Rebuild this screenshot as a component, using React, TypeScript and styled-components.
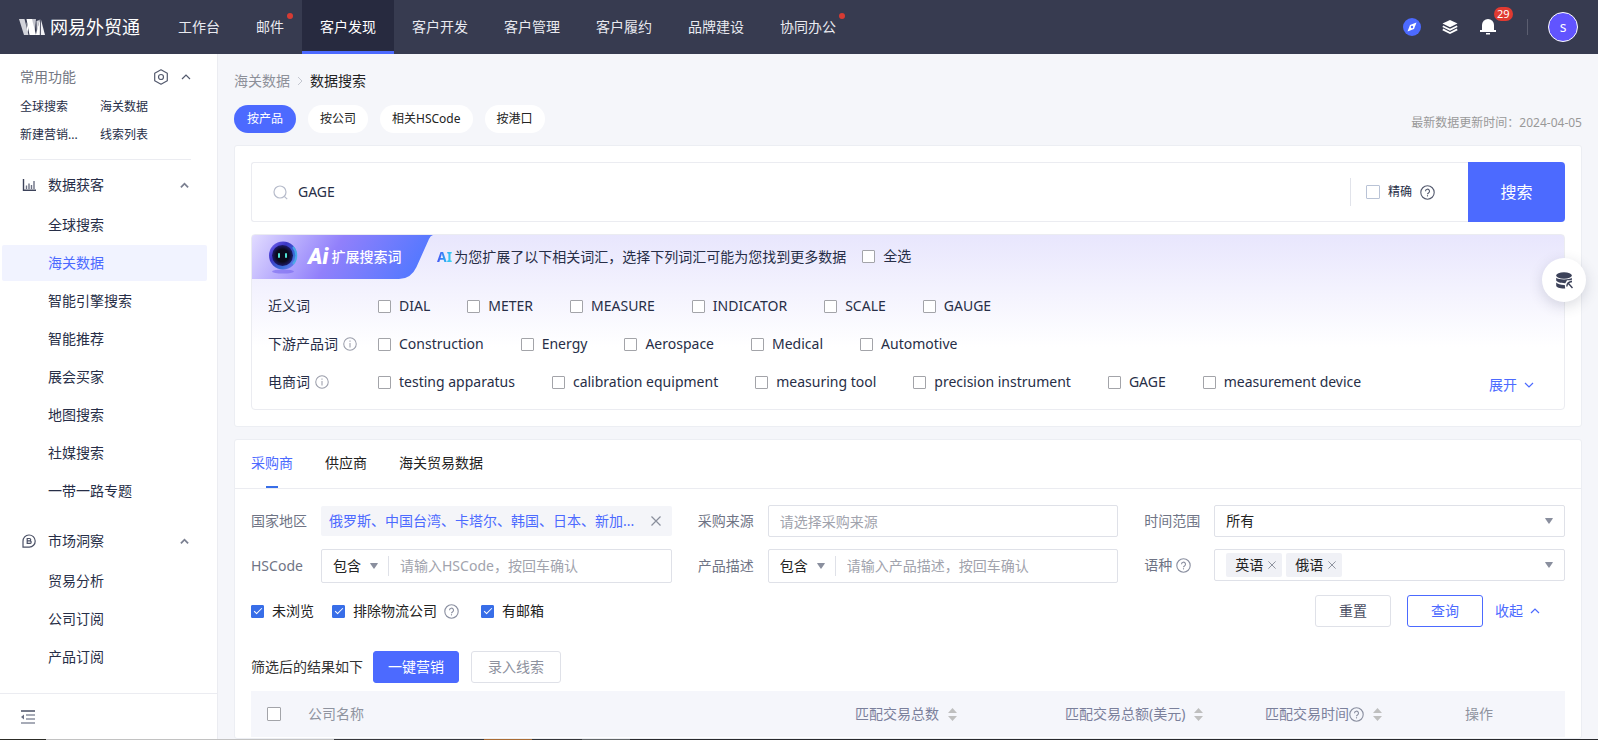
import React from "react";
import styled, { createGlobalStyle, css } from "styled-components";

const BLUE = "#4c6aff";
const INK = "#272e47";

const Global = createGlobalStyle`
  *, *::before, *::after { box-sizing: border-box; }
  body {
    margin: 0;
    background: #f5f6fa;
    color: ${INK};
    font: 14px/20px "Noto Sans", "Noto Sans CJK SC", sans-serif;
  }
  button, input, select { font: inherit; color: inherit; margin: 0; padding: 0; }
  button { background: none; border: 0; cursor: pointer; white-space: nowrap; }
  a { color: inherit; text-decoration: none; }
  svg { display: block; flex: none; }
  h2 { margin: 0; font: inherit; }
`;

/* ---------- page frame ---------- */

const Shell = styled.div`
  display: flex;
  flex-direction: column;
  height: 100vh;
  overflow: hidden;
`;

const TopBar = styled.header`
  display: flex;
  align-items: center;
  flex: none;
  height: 54px;
  padding: 0 20px 0 19px;
  background: #373b50;
  color: #fff;
`;

const Body = styled.div`
  display: flex;
  flex: 1;
  min-height: 0;
`;

const Strip = styled.div`
  flex: none;
  height: 1px;
  background: linear-gradient(
    90deg,
    #2c2c26 46px,
    #c2c2c2 46px 334px,
    #37383c 334px 484px,
    #a96c35 484px 532px,
    #333438 532px 582px,
    #626668 582px 630px,
    #28292d 630px
  );
`;

/* ---------- top bar ---------- */

const Brand = styled.a`
  display: flex;
  align-items: center;
  gap: 5px;
  width: 141px;
  font-size: 18px;
  white-space: nowrap;
`;

const Nav = styled.nav`
  display: flex;
  flex: 1;
  align-self: stretch;
`;

const NavLink = styled.a<{ $active?: boolean }>`
  display: flex;
  align-items: center;
  padding: 0 18px;
  color: #e9eaf0;
  white-space: nowrap;
  border-top: 3px solid transparent;
  border-bottom: 3px solid transparent;
  ${(p) =>
    p.$active &&
    css`
      color: #fff;
      background: #272a3f;
      border-top-color: #272a3f;
      border-bottom-color: ${BLUE};
    `}
`;

const Dotted = styled.span`
  position: relative;
  &::after {
    content: "";
    position: absolute;
    top: -4px;
    right: -9px;
    width: 6px;
    height: 6px;
    border-radius: 50%;
    background: #d63b33;
  }
`;

const Tools = styled.div`
  display: flex;
  align-items: center;
  gap: 20px;
`;

const ToolButton = styled.button`
  position: relative;
  display: grid;
  place-items: center;
  width: 18px;
  height: 18px;
`;

const Count = styled.span`
  position: absolute;
  top: -11px;
  left: 15px;
  padding: 0 3px;
  border-radius: 7px;
  background: #e03a31;
  color: #fff;
  font-size: 11px;
  line-height: 14px;
`;

const ToolDivider = styled.span`
  width: 1px;
  height: 16px;
  margin-left: 10px;
  background: #5b5e70;
`;

const Avatar = styled.button`
  width: 30px;
  height: 30px;
  border: 1px solid #fff;
  border-radius: 50%;
  background: #6154ff;
  color: #fff;
`;

/* ---------- side bar ---------- */

const Side = styled.aside`
  display: flex;
  flex-direction: column;
  flex: none;
  width: 218px;
  background: #fff;
  border-right: 1px solid #ebecf1;
`;

const SideScroll = styled.div`
  flex: 1;
  min-height: 0;
  overflow: hidden;
  padding-top: 12px;
`;

const QuickHead = styled.div`
  display: flex;
  align-items: center;
  gap: 12px;
  height: 22px;
  padding: 0 26px 0 20px;
  color: #747883;
  h2 { flex: 1; }
  button { color: #545a6e; }
`;

const QuickLinks = styled.div`
  display: grid;
  grid-template-columns: 80px auto;
  grid-auto-rows: 28px;
  align-items: center;
  margin: 5px 26px 3px 20px;
  padding-bottom: 10px;
  border-bottom: 1px solid #ebecf1;
  font-size: 12px;
`;

const Group = styled.section`
  margin-bottom: 10px;
`;

const GroupHead = styled.button`
  display: flex;
  align-items: center;
  gap: 12px;
  width: 100%;
  height: 44px;
  padding: 0 28px 0 22px;
  text-align: left;
  span { flex: 1; }
`;

const SideLink = styled.a<{ $active?: boolean }>`
  display: flex;
  align-items: center;
  height: 36px;
  margin: 0 10px 2px 2px;
  padding-left: 46px;
  border-radius: 2px;
  color: ${(p) => (p.$active ? BLUE : INK)};
  background: ${(p) => (p.$active ? "#f1f3ff" : "none")};
`;

const SideFoot = styled.div`
  display: flex;
  align-items: center;
  flex: none;
  height: 46px;
  padding-left: 21px;
  border-top: 1px solid #ebecf1;
`;

/* ---------- main column ---------- */

const Main = styled.main`
  display: flex;
  flex-direction: column;
  flex: 1;
  min-width: 0;
  padding: 17px 16px 0;
`;

const Crumbs = styled.nav`
  display: flex;
  align-items: center;
  gap: 7px;
  color: #8d9099;
  b { font-weight: 400; color: #232323; }
`;

const PillRow = styled.div`
  display: flex;
  align-items: center;
  gap: 12px;
  margin: 14px 0 12px;
`;

const Pill = styled.button<{ $active?: boolean }>`
  height: 28px;
  padding: 0 ${(p) => (p.$active ? 13 : 12)}px;
  border-radius: 14px;
  font-size: 12px;
  background: ${(p) => (p.$active ? BLUE : "#fff")};
  color: ${(p) => (p.$active ? "#fff" : "#232323")};
`;

const Updated = styled.span`
  align-self: flex-end;
  margin-left: auto;
  color: #999;
  font-size: 12px;
`;

const Card = styled.section<{ $fill?: boolean }>`
  flex: ${(p) => (p.$fill ? "1" : "none")};
  min-height: 0;
  border: 1px solid #eceef3;
  border-radius: 3px;
  background: #fff;
`;

const SearchCard = styled(Card)`
  padding: 16px;
  margin-bottom: 12px;
`;

const SearchBox = styled.form`
  display: flex;
  align-items: center;
  height: 60px;
  padding-left: 21px;
  border: 1px solid #ebecf1;
  border-right: 0;
  border-radius: 3px;
  font-size: 14px;
`;

const SearchInput = styled.input`
  flex: 1;
  min-width: 0;
  margin-left: 10px;
  border: 0;
  outline: 0;
  background: none;
`;

const Exact = styled.div`
  display: flex;
  align-items: center;
  gap: 8px;
  height: 28px;
  padding: 0 33px 0 15px;
  border-left: 1px solid #e1e3ea;
  font-size: 12px;
`;

const SearchButton = styled.button`
  width: 97px;
  height: 60px;
  border-radius: 0 4px 4px 0;
  background: ${BLUE};
  color: #fff;
  font-size: 16px;
`;

const AiPanel = styled.div`
  margin-top: 12px;
  border: 1px solid #ebecf1;
  border-radius: 4px;
  overflow: hidden;
  background: linear-gradient(180deg, #e8e6fd 0, #fff 112px);
  padding-bottom: 8px;
`;

const AiHead = styled.div`
  display: flex;
  align-items: center;
  height: 44px;
  margin-bottom: 8px;
`;

const AiBadge = styled.div`
  position: relative;
  display: flex;
  align-items: center;
  width: 185px;
  height: 44px;
  padding-left: 16px;
  color: #fff;
  font-weight: 500;
`;

const BadgeShape = styled.svg`
  position: absolute;
  top: 0;
  left: 0;
`;

const BadgeText = styled.span`
  position: relative;
  display: flex;
  align-items: center;
  gap: 3px;
  margin-left: 10px;
  i { font: italic 900 22px/24px Roboto, sans-serif; }
`;

const Robot = styled.svg`
  position: relative;
`;

const AiWord = styled.b`
  margin-right: 2px;
  background: linear-gradient(100deg, #4c4cf5 10%, #2d9cf5 50%, #35d6ee 90%);
  background-clip: text;
  color: transparent;
`;

const AiSelectAll = styled.div`
  margin-left: 16px;
`;

const WordRow = styled.div`
  display: flex;
  align-items: center;
  height: 38px;
  padding: 0 30px 0 16px;
`;

const WordLabel = styled.div`
  display: flex;
  align-items: center;
  gap: 5px;
  width: 110px;
  color: ${INK};
`;

const WordList = styled.div`
  display: flex;
  flex: 1;
  gap: 37px;
`;

const TextButton = styled.button`
  display: flex;
  align-items: center;
  gap: 7px;
  color: ${BLUE};
`;

const MoreButton = styled(TextButton)`
  padding-top: 6px;
`;

/* ---------- form pieces ---------- */

const CheckLabel = styled.label`
  display: inline-flex;
  align-items: center;
  gap: 8px;
  white-space: nowrap;
`;

const Check = styled.input.attrs({ type: "checkbox" })<{ $size?: number; $tone?: string }>`
  appearance: none;
  display: grid;
  place-items: center;
  flex: none;
  width: ${(p) => p.$size ?? 13}px;
  height: ${(p) => p.$size ?? 13}px;
  border: 1px solid ${(p) => p.$tone ?? "#a3a4a9"};
  border-radius: 1px;
  background: #fff;
  &:checked {
    border-color: #386ee8;
    background: #386ee8;
  }
  &:checked::after {
    content: "";
    width: 4px;
    height: 8px;
    margin-bottom: 2px;
    border: solid #fff;
    border-width: 0 1px 1px 0;
    transform: rotate(45deg);
  }
`;

const Tabs = styled.div`
  display: flex;
  gap: 32px;
  height: 49px;
  padding: 0 16px;
  border-bottom: 1px solid #ebecf1;
`;

const Tab = styled.button<{ $active?: boolean }>`
  display: grid;
  grid-template-rows: 1fr 2px;
  justify-items: center;
  align-items: center;
  color: ${(p) => (p.$active ? BLUE : "#232323")};
  &::after {
    content: "";
    width: 12px;
    height: 2px;
    background: ${(p) => (p.$active ? "#386ee8" : "none")};
  }
`;

const Filters = styled.div`
  display: grid;
  grid-template-columns: repeat(3, 1fr);
  align-items: start;
  gap: 12px 26px;
  padding: 16px 16px 0;
`;

const Field = styled.div`
  display: flex;
  align-items: center;
  min-height: 32px;
`;

const FieldLabel = styled.label`
  display: flex;
  align-items: center;
  gap: 4px;
  flex: none;
  width: 70px;
  color: #6f7485;
`;

const frame = css`
  flex: 1;
  min-width: 0;
  border: 1px solid #dfe1e8;
  border-radius: 2px;
  background: #fff;
  color: #232323;
`;

const TextInput = styled.input`
  ${frame}
  height: 32px;
  padding: 0 11px;
  &::placeholder { color: #a1a3ad; opacity: 1; }
`;

const Combo = styled.div<{ $tall?: boolean }>`
  ${frame}
  display: flex;
  align-items: center;
  gap: 4px;
  height: ${(p) => (p.$tall ? 34 : 32)}px;
  padding: 0 11px;
`;

const PlainSelect = styled.select<{ $width?: number }>`
  appearance: none;
  border: 0;
  outline: 0;
  background: none;
  ${(p) => (p.$width ? `width: ${p.$width}px;` : "flex: 1;")}
`;

const BareInput = styled.input`
  flex: 1;
  min-width: 0;
  height: 20px;
  margin-left: 6px;
  padding-left: 11px;
  border: 0;
  border-left: 1px solid #dfe1e8;
  outline: 0;
  background: none;
  &::placeholder { color: #a1a3ad; opacity: 1; }
`;

const Picked = styled.div`
  display: flex;
  align-items: center;
  flex: 1;
  min-width: 0;
  height: 30px;
  padding: 0 11px 0 8px;
  border-radius: 2px;
  background: #f4f5f9;
  color: ${BLUE};
  white-space: nowrap;
  > span { flex: 1; }
`;

const Tag = styled.span`
  display: flex;
  align-items: center;
  gap: 5px;
  height: 24px;
  padding: 0 6px 0 9px;
  border-radius: 2px;
  background: #f0f1f6;
  & + & { margin-right: auto; }
`;

const Options = styled.div`
  display: flex;
  align-items: center;
  height: 32px;
  margin: 12px 16px 0;
  padding-right: 25px;
  color: #232323;
`;

const OptionGroup = styled.div<{ $after: number }>`
  display: flex;
  align-items: center;
  gap: 7px;
  margin-right: ${(p) => p.$after}px;
`;

const Actions = styled.div`
  display: flex;
  gap: 16px;
  margin: 0 12px 0 auto;
`;

const Button = styled.button<{ $kind: "plain" | "outline" | "solid" | "muted"; $width: number }>`
  width: ${(p) => p.$width}px;
  height: 32px;
  border: 1px solid ${(p) => (p.$kind === "plain" || p.$kind === "muted" ? "#dfe1e8" : BLUE)};
  border-radius: 3px;
  background: ${(p) => (p.$kind === "solid" ? BLUE : "#fff")};
  color: ${(p) => ({ plain: "#4b5064", outline: BLUE, solid: "#fff", muted: "#8d919e" })[p.$kind]};
`;

const ResultBar = styled.div`
  display: flex;
  align-items: center;
  gap: 12px;
  margin: 24px 16px 8px;
  color: #333;
  > span { margin-right: -2px; }
`;

const TableWrap = styled.div`
  padding: 0 16px;
`;

const Table = styled.table`
  width: 100%;
  table-layout: fixed;
  border-collapse: collapse;
  background: #f5f6fb;
  th {
    height: 46px;
    padding: 0;
    font-weight: 400;
    text-align: left;
    white-space: nowrap;
    color: #7b809b;
  }
  th:nth-child(1) { padding-left: 16px; }
  th:nth-child(2), th:last-child { color: #8f939f; }
`;

const HeadCell = styled.span`
  display: flex;
  align-items: center;
  svg:last-child { margin-left: 9px; }
`;

const FloatButton = styled.button`
  position: fixed;
  top: 258px;
  right: 12px;
  display: grid;
  place-items: center;
  width: 44px;
  height: 44px;
  border-radius: 50%;
  background: #fff;
  box-shadow: 0 4px 14px rgba(50, 56, 85, 0.18);
`;

/* ---------- drawings ---------- */

const LogoMark = () => (
  <svg width="26" height="16" viewBox="0 0 26 16">
    <path d="M0 0h5.500l4 16H5Z" fill="#d2d3da" />
    <path d="M12.500 0h4.500l-1.500 15Z" fill="#c4c5ce" />
    <path d="M7.500 0h5.500l4 16h-6.500Z" fill="#fff" />
    <path d="M7.600 3 9.300 9.500 8.200 14Z" fill="#fff" />
    <path d="M17.500 2 20.500 1 17.800 14Z" fill="#d2d3da" />
    <path d="M21 0 16.800 16h4Z" fill="#fff" />
    <path d="M21.800 0 26 16h-4.200Z" fill="#f1f1f5" />
  </svg>
);

const Compass = () => (
  <svg width="18" height="18" viewBox="0 0 18 18">
    <circle cx="9" cy="9" r="9" fill={BLUE} />
    <path d="M13.500 4.500 11 11 4.500 13.500 7 7Z" fill="#fff" />
    <circle cx="9" cy="9" r="1.200" fill={BLUE} />
  </svg>
);

const Layers = () => (
  <svg width="16" height="16" viewBox="0 0 16 16">
    <path d="M8 1 15.500 4.500 8 8.200.500 4.500Z" fill="#fff" />
    <path d="M.800 7.200 8 10.800l7.200-3.600M.800 10.400 8 14l7.200-3.600" fill="none" stroke="#fff" strokeWidth="1.800" />
  </svg>
);

const Bell = () => (
  <svg width="16" height="18" viewBox="0 0 16 18">
    <path d="M8 1a6 6 0 0 1 6 6v5H2V7a6 6 0 0 1 6-6Z" fill="#fff" />
    <path d="M0 12h16v2H0ZM6 15h4v1.500H6Z" fill="#fff" />
  </svg>
);

const HexGear = () => (
  <svg width="16" height="16" viewBox="0 0 16 16" fill="none" stroke="currentColor" strokeWidth="1.200">
    <path d="M8 .800 14.300 4.300v7.400L8 15.200 1.700 11.700V4.300Z" strokeLinejoin="round" />
    <circle cx="8" cy="8" r="2.500" />
  </svg>
);

const Chevron = ({ up, bold, size = 10 }: { up?: boolean; bold?: boolean; size?: number }) => (
  <svg width={size} height={size} viewBox="0 0 10 10" fill="none" stroke={bold ? "#7a7f90" : "currentColor"} strokeWidth={bold ? 2 : 1.200}>
    <path d={up ? "M1 7l4-4 4 4" : "M1 3l4 4 4-4"} />
  </svg>
);

const ChartIcon = () => (
  <svg width="14" height="14" viewBox="0 0 14 14" fill="none" stroke="#6d7285" strokeWidth="1.400">
    <path d="M1.500 1v11.300H14" stroke="#3c4259" />
    <path d="M4.500 7.500V11M7 5.500V11M9.500 7V11M12 3V11" />
  </svg>
);

const BubbleIcon = () => (
  <svg width="14" height="14" viewBox="0 0 14 14" fill="none" stroke="#4b5166" strokeWidth="1.200">
    <path d="M1 13.200V7.300A6.100 6.100 0 1 1 7.300 13.200Z" />
    <path d="M5.200 4.500h2.300a1.200 1.200 0 0 1 0 2.400H5.200Zm0 2.400h2.700a1.200 1.200 0 0 1 0 2.500H5.200Z" />
  </svg>
);

const CollapseIcon = () => (
  <svg width="14" height="14" viewBox="0 0 14 14" fill="none" stroke="#8b90a0" strokeWidth="1.600">
    <path d="M0 1h14" stroke="#545a6e" />
    <path d="M5 5h9M5 9h9M0 13h14" />
    <path d="M3 4.500v5L0 7Z" fill="#6a7084" stroke="none" />
  </svg>
);

const SearchIcon = () => (
  <svg width="15" height="15" viewBox="0 0 15 15" fill="none" stroke="#b7bccb" strokeWidth="1.200">
    <circle cx="7" cy="7" r="6" />
    <path d="m11.300 11.300 2.900 2.900" />
  </svg>
);

const Help = ({ tone = "#8a8fa0" }: { tone?: string }) => (
  <svg width="15" height="15" viewBox="0 0 15 15" fill="none" stroke={tone} strokeWidth="1.100">
    <circle cx="7.500" cy="7.500" r="6.700" />
    <path d="M5.500 6.200a2 2 0 1 1 3 1.700c-.700.400-1 .700-1 1.300" />
    <path d="M7.500 10.200v1.200" />
  </svg>
);

const Info = () => (
  <svg width="14" height="14" viewBox="0 0 15 15" fill="none" stroke="#9a9daa" strokeWidth="1.100">
    <circle cx="7.500" cy="7.500" r="6.700" />
    <path d="M7.500 6.300v4.900M7.500 3.800v1.300" />
  </svg>
);

const Cross = ({ size = 10 }: { size?: number }) => (
  <svg width={size} height={size} viewBox="0 0 10 10" stroke="#8a8f9c" strokeWidth="1.200">
    <path d="m.500.500 9 9m0-9-9 9" />
  </svg>
);

const Caret = () => (
  <svg width="8" height="6" viewBox="0 0 8 6">
    <path d="M.500 0h7q.500.300.200.800L4.400 5.500q-.400.400-.800 0L.300.800Q0 .300.500 0Z" fill="#8a8f9e" />
  </svg>
);

const Sorter = () => (
  <svg width="9" height="13" viewBox="0 0 9 13" fill="#bfbfbf">
    <path d="M4.500 0 9 5H0ZM4.500 13 0 8h9Z" />
  </svg>
);

const DatabaseIcon = () => (
  <svg width="17" height="17" viewBox="0 0 17 17">
    <ellipse cx="8" cy="3.500" rx="7.800" ry="3.200" fill="#3c4259" />
    <path d="M.200 5.800c2 2.300 13.600 2.300 15.600 0v2.400H11L9.300 11.200C5 11.300.800 10.300.200 8.600ZM.200 10.600c1.500 1.700 5 2.400 8.600 2.300l.400 3.600c-5 .200-9-1-9-3Z" fill="#3c4259" />
    <path d="M16 9.500c-3 .200-5 1.800-5.200 5M12.500 11.500l4 4.500" fill="none" stroke="#3c4259" strokeWidth="1.400" />
  </svg>
);

const RobotHead = () => (
  <Robot width="30" height="34" viewBox="0 0 30 34">
    <defs>
      <linearGradient id="halo" x1="0" y1="0" x2="1" y2="1">
        <stop offset="0" stopColor="#7a6cf8" />
        <stop offset=".35" stopColor="#3a35c4" />
        <stop offset=".7" stopColor="#3a6fd8" />
        <stop offset="1" stopColor="#8f7cff" />
      </linearGradient>
      <radialGradient id="face">
        <stop offset=".6" stopColor="#0b0a1c" />
        <stop offset="1" stopColor="#1d1a6b" />
      </radialGradient>
    </defs>
    <ellipse cx="15" cy="31.500" rx="11" ry="2" fill="#7668ee" opacity=".6" />
    <circle cx="15" cy="15.500" r="14" fill="url(#halo)" />
    <path d="M25 7a12.500 12.500 0 0 1 0 17" fill="none" stroke="#48b6e8" strokeWidth="2" opacity=".8" />
    <circle cx="14.500" cy="15.500" r="10.500" fill="url(#face)" />
    <rect x="10" y="13" width="2" height="5" rx="1" fill="#4fe3d6" />
    <rect x="17" y="13" width="2" height="5" rx="1" fill="#4fe3d6" />
  </Robot>
);

const BadgeBackground = () => (
  <BadgeShape width="182" height="44" viewBox="0 0 182 44">
    <defs>
      <linearGradient id="badge" x1="0" y1="0" x2="1" y2=".15">
        <stop offset="0" stopColor="#e2dcff" />
        <stop offset=".5" stopColor="#9180fb" />
        <stop offset="1" stopColor="#5578ff" />
      </linearGradient>
    </defs>
    <path d="M0 0h181q-2.500.500-4 4L164.500 32Q159 44 147 44H0Z" fill="url(#badge)" />
  </BadgeShape>
);

/* ---------- data ---------- */

const NAV = [
  { text: "工作台" },
  { text: "邮件", dot: true },
  { text: "客户发现", active: true },
  { text: "客户开发" },
  { text: "客户管理" },
  { text: "客户履约" },
  { text: "品牌建设" },
  { text: "协同办公", dot: true },
];

const QUICK = ["全球搜索", "海关数据", "新建营销...", "线索列表"];

const GROUPS = [
  {
    title: "数据获客",
    icon: <ChartIcon />,
    items: ["全球搜索", "海关数据", "智能引擎搜索", "智能推荐", "展会买家", "地图搜索", "社媒搜索", "一带一路专题"],
    active: "海关数据",
  },
  { title: "市场洞察", icon: <BubbleIcon />, items: ["贸易分析", "公司订阅", "产品订阅"] },
];

const WORDS = [
  { label: "近义词", words: ["DIAL", "METER", "MEASURE", "INDICATOR", "SCALE", "GAUGE"] },
  { label: "下游产品词", info: true, words: ["Construction", "Energy", "Aerospace", "Medical", "Automotive"] },
  {
    label: "电商词",
    info: true,
    more: true,
    words: ["testing apparatus", "calibration equipment", "measuring tool", "precision instrument", "GAGE", "measurement device"],
  },
];

const MatchField = ({ id, label, hint }: { id: string; label: string; hint: string }) => (
  <Field>
    <FieldLabel htmlFor={id}>{label}</FieldLabel>
    <Combo $tall>
      <PlainSelect $width={33} aria-label={`${label}匹配方式`}>
        <option>包含</option>
      </PlainSelect>
      <Caret />
      <BareInput id={id} placeholder={hint} />
    </Combo>
  </Field>
);

export default function App() {
  return (
    <Shell>
      <Global />
      <TopBar>
        <Brand href="#">
          <LogoMark />
          网易外贸通
        </Brand>
        <Nav>
          {NAV.map((n) => (
            <NavLink key={n.text} href="#" $active={n.active}>
              {n.dot ? <Dotted>{n.text}</Dotted> : n.text}
            </NavLink>
          ))}
        </Nav>
        <Tools>
          <ToolButton aria-label="导航"><Compass /></ToolButton>
          <ToolButton aria-label="应用"><Layers /></ToolButton>
          <ToolButton aria-label="通知">
            <Bell />
            <Count>29</Count>
          </ToolButton>
          <ToolDivider />
          <Avatar>s</Avatar>
        </Tools>
      </TopBar>

      <Body>
        <Side>
          <SideScroll>
            <QuickHead>
              <h2>常用功能</h2>
              <button aria-label="设置"><HexGear /></button>
              <button aria-label="收起常用功能"><Chevron up /></button>
            </QuickHead>
            <QuickLinks>
              {QUICK.map((q) => (
                <a key={q} href="#">{q}</a>
              ))}
            </QuickLinks>
            {GROUPS.map((g) => (
              <Group key={g.title}>
                <GroupHead>
                  {g.icon}
                  <span>{g.title}</span>
                  <Chevron up bold size={9} />
                </GroupHead>
                {g.items.map((i) => (
                  <SideLink key={i} href="#" $active={i === g.active}>{i}</SideLink>
                ))}
              </Group>
            ))}
          </SideScroll>
          <SideFoot>
            <button aria-label="折叠菜单"><CollapseIcon /></button>
          </SideFoot>
        </Side>

        <Main>
          <Crumbs>
            <a href="#">海关数据</a>
            <svg width="6" height="10" viewBox="0 0 6 10" fill="none" stroke="#c4c7d0">
              <path d="m1 1 4 4-4 4" />
            </svg>
            <b>数据搜索</b>
          </Crumbs>

          <PillRow>
            <Pill $active>按产品</Pill>
            <Pill>按公司</Pill>
            <Pill>相关HSCode</Pill>
            <Pill>按港口</Pill>
            <Updated>最新数据更新时间：2024-04-05</Updated>
          </PillRow>

          <SearchCard>
            <SearchBox>
              <SearchIcon />
              <SearchInput aria-label="产品" defaultValue="GAGE" />
              <Exact>
                <CheckLabel>
                  <Check $size={14} $tone="#b9c3d6" />
                  精确
                </CheckLabel>
                <Help tone="#545a6e" />
              </Exact>
              <SearchButton type="button">搜索</SearchButton>
            </SearchBox>

            <AiPanel>
              <AiHead>
                <AiBadge>
                  <BadgeBackground />
                  <RobotHead />
                  <BadgeText>
                    <i>Ai</i>
                    扩展搜索词
                  </BadgeText>
                </AiBadge>
                <AiWord>AI</AiWord>
                为您扩展了以下相关词汇，选择下列词汇可能为您找到更多数据
                <AiSelectAll>
                  <CheckLabel>
                    <Check />
                    全选
                  </CheckLabel>
                </AiSelectAll>
              </AiHead>
              {WORDS.map((row) => (
                <WordRow key={row.label}>
                  <WordLabel>
                    {row.label}
                    {row.info && <Info />}
                  </WordLabel>
                  <WordList>
                    {row.words.map((w) => (
                      <CheckLabel key={w}>
                        <Check />
                        {w}
                      </CheckLabel>
                    ))}
                  </WordList>
                  {row.more && (
                    <MoreButton>
                      展开
                      <Chevron />
                    </MoreButton>
                  )}
                </WordRow>
              ))}
            </AiPanel>
          </SearchCard>

          <Card $fill>
            <Tabs>
              <Tab $active>采购商</Tab>
              <Tab>供应商</Tab>
              <Tab>海关贸易数据</Tab>
            </Tabs>

            <Filters>
              <Field>
                <FieldLabel as="span">国家地区</FieldLabel>
                <Picked>
                  <span>俄罗斯、中国台湾、卡塔尔、韩国、日本、新加...</span>
                  <button aria-label="清除国家地区"><Cross /></button>
                </Picked>
              </Field>
              <Field>
                <FieldLabel htmlFor="source">采购来源</FieldLabel>
                <TextInput id="source" placeholder="请选择采购来源" />
              </Field>
              <Field>
                <FieldLabel htmlFor="range">时间范围</FieldLabel>
                <Combo>
                  <PlainSelect id="range">
                    <option>所有</option>
                  </PlainSelect>
                  <Caret />
                </Combo>
              </Field>
              <MatchField id="hscode" label="HSCode" hint="请输入HSCode，按回车确认" />
              <MatchField id="desc" label="产品描述" hint="请输入产品描述，按回车确认" />
              <Field>
                <FieldLabel as="span">
                  语种
                  <Help />
                </FieldLabel>
                <Combo>
                  {["英语", "俄语"].map((t) => (
                    <Tag key={t}>
                      {t}
                      <button aria-label={`移除${t}`}><Cross size={8} /></button>
                    </Tag>
                  ))}
                  <Caret />
                </Combo>
              </Field>
            </Filters>

            <Options>
              <OptionGroup $after={18}>
                <CheckLabel><Check defaultChecked />未浏览</CheckLabel>
              </OptionGroup>
              <OptionGroup $after={22}>
                <CheckLabel><Check defaultChecked />排除物流公司</CheckLabel>
                <Help />
              </OptionGroup>
              <OptionGroup $after={0}>
                <CheckLabel><Check defaultChecked />有邮箱</CheckLabel>
              </OptionGroup>
              <Actions>
                <Button $kind="plain" $width={76}>重置</Button>
                <Button $kind="outline" $width={76}>查询</Button>
              </Actions>
              <TextButton>
                收起
                <Chevron up />
              </TextButton>
            </Options>

            <ResultBar>
              <span>筛选后的结果如下</span>
              <Button $kind="solid" $width={86}>一键营销</Button>
              <Button $kind="muted" $width={90}>录入线索</Button>
            </ResultBar>

            <TableWrap>
              <Table>
                <colgroup>
                  <col style={{ width: 57 }} />
                  <col />
                  <col style={{ width: 210 }} />
                  <col style={{ width: 200 }} />
                  <col style={{ width: 200 }} />
                  <col style={{ width: 100 }} />
                </colgroup>
                <thead>
                  <tr>
                    <th><Check $size={14} aria-label="选择全部公司" /></th>
                    <th>公司名称</th>
                    <th><HeadCell>匹配交易总数<Sorter /></HeadCell></th>
                    <th><HeadCell>匹配交易总额(美元)<Sorter /></HeadCell></th>
                    <th><HeadCell>匹配交易时间<Help /><Sorter /></HeadCell></th>
                    <th>操作</th>
                  </tr>
                </thead>
              </Table>
            </TableWrap>
          </Card>
        </Main>
      </Body>
      <Strip />
      <FloatButton aria-label="数据面板"><DatabaseIcon /></FloatButton>
    </Shell>
  );
}
